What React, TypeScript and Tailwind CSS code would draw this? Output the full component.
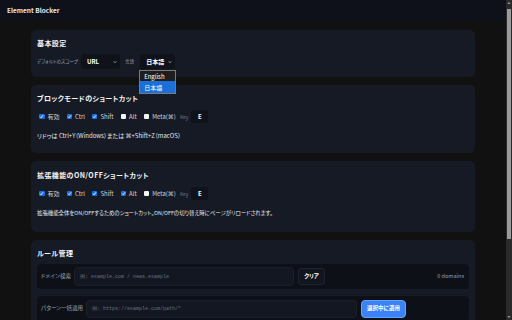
import React from 'react';

function Chevron() {
  return (
    <svg viewBox="0 0 10 10" className="w-[4px] h-[4px]" fill="none" stroke="#d1d5db" strokeWidth="2">
      <path d="M2 3.5l3 3 3-3" />
    </svg>
  );
}

function Select({ value, w }: { value: string; w: string }) {
  return (
    <div className={`${w} h-[15px] flex items-center justify-between rounded-[3px] bg-[#0f1219] pl-[6px] pr-[3px] text-[6px] font-bold text-white`}>
      <span>{value}</span>
      <Chevron />
    </div>
  );
}

function Check({ on }: { on: boolean }) {
  if (!on) return <span className="w-[5.5px] h-[5.5px] rounded-[1px] bg-[#f5f5f5] shrink-0" />;
  return (
    <span className="w-[5.5px] h-[5.5px] rounded-[1px] bg-[#1a6fe0] flex items-center justify-center shrink-0">
      <svg viewBox="0 0 10 10" className="w-[5px] h-[5px]" fill="none" stroke="white" strokeWidth="1.8">
        <path d="M2.2 5.4l2 2 3.8-4.8" />
      </svg>
    </span>
  );
}

const Cmd = () => <span className="font-['DejaVu_Sans',sans-serif]">⌘</span>;

function ShortcutRow({ alt }: { alt: boolean }) {
  const items: [React.ReactNode, boolean][] = [
    ['有効', true],
    ['Ctrl', true],
    ['Shift', true],
    ['Alt', alt],
    [<>Meta(<Cmd />)</>, false],
  ];
  return (
    <div className="flex items-center h-[13px] pl-[2px]">
      {items.map(([label, on], i) => (
        <label key={i} className={`flex items-center gap-[3px] ${i ? 'ml-[7px]' : ''}`}>
          <Check on={on} />
          <span className="text-[6px] text-[#d1d5db]">{label}</span>
        </label>
      ))}
      <span className="ml-[4px] text-[5px] text-[#6b7280]">Key</span>
      <span className="ml-[3px] w-[17px] h-[13px] rounded-[3px] bg-[#0f1219] flex items-center justify-center text-[6px] font-bold text-white">E</span>
    </div>
  );
}

function Card({ title, children, className = '' }: { title: string; children: React.ReactNode; className?: string }) {
  return (
    <section className={`rounded-[5px] bg-[#161a25] px-[6px] pt-[8px] ${className}`}>
      <h2 className="text-[7px] leading-[10px] font-bold tracking-[0.4px] text-[#f3f4f6]">{title}</h2>
      {children}
    </section>
  );
}

export default function App() {
  return (
    <div className="flex h-[320px] w-[512px] overflow-hidden bg-[#111111] font-['Noto_Sans_CJK_JP',sans-serif] [font-feature-settings:'palt']">
      <div className="w-[506px] shrink-0">
        <header className="h-[21px] bg-[#0e1119] flex items-center px-[7px] text-[6.5px] font-bold text-[#e5e7eb]">
          Element Blocker
        </header>

        <main className="px-[31px] pt-[9px] flex flex-col gap-[8px]">
          <Card title="基本設定" className="pb-[8px]">
            <div className="mt-[6px] flex items-center h-[15px]">
              <span className="text-[4.6px] text-[#9ca3af]">デフォルトのスコープ</span>
              <div className="ml-[3px]">
                <Select value="URL" w="w-[39px]" />
              </div>
              <span className="ml-[5px] text-[4.6px] text-[#9ca3af]">言語</span>
              <div className="relative ml-[6px]">
                <Select value="日本語" w="w-[35px]" />
                <div className="absolute top-[16px] left-[-1px] w-[37px] border border-[#7a7a7a] bg-[#1e1e1e] text-[6px] text-white z-10">
                  <div className="h-[10px] flex items-center pl-[4px]">English</div>
                  <div className="h-[12px] flex items-center pl-[4px] bg-[#1a6fd8]">日本語</div>
                </div>
              </div>
            </div>
          </Card>

          <Card title="ブロックモードのショートカット" className="pb-[12px]">
            <div className="mt-[7px]">
              <ShortcutRow alt={false} />
            </div>
            <p className="mt-[8px] text-[6px] leading-[10px] text-[#e5e7eb]">
              リドゥは Ctrl+Y（Windows）または <Cmd />+Shift+Z（macOS）
            </p>
          </Card>

          <Card title="拡張機能のON/OFFショートカット" className="pb-[14px] pt-[9px]">
            <div className="mt-[7px]">
              <ShortcutRow alt={true} />
            </div>
            <p className="mt-[8px] text-[5.4px] leading-[10px] text-[#e5e7eb]">
              拡張機能全体をON/OFFするためのショートカット。ON/OFFの切り替え時にページがリロードされます。
            </p>
          </Card>

          <Card title="ルール管理" className="pb-[12px] pt-[7px]">
            <div className="mt-[6px] flex items-center h-[25px] rounded-[4px] bg-[#0d1017] pl-[4px] pr-[5px]">
              <span className="text-[5.5px] text-[#9ca3af] w-[32px]">ドメイン検索</span>
              <input
                readOnly
                placeholder="例: example.com / news.example"
                className="ml-[1px] w-[220px] h-[19px] rounded-[4px] bg-[#131722] border border-[#1a1f2a] px-[5px] font-['Liberation_Mono',monospace] text-[5px] text-white placeholder:text-[#6b7280] outline-none"
              />
              <button className="ml-[4px] w-[27px] h-[17px] rounded-[3px] bg-[#111520] border border-[#1e2330] text-[5.5px] font-bold text-white">
                クリア
              </button>
              <span className="ml-auto text-[5.5px] text-[#9ca3af]">0 domains</span>
            </div>

            <div className="mt-[7px] flex items-center h-[25px] rounded-[4px] bg-[#0d1017] pl-[4px] pr-[5px]">
              <span className="text-[5.5px] text-[#9ca3af] w-[45px]">パターン一括適用</span>
              <input
                readOnly
                placeholder="例: https://example.com/path/*"
                className="w-[271px] h-[18px] rounded-[4px] bg-[#131722] border border-[#1a1f2a] px-[5px] font-['Liberation_Mono',monospace] text-[5px] text-white placeholder:text-[#6b7280] outline-none"
              />
              <button className="ml-[4px] w-[45px] h-[18px] rounded-[4px] bg-[#3b82f6] border border-[#60a5fa] text-[5.5px] font-bold text-white">
                選択中に適用
              </button>
            </div>

            <div className="mt-[7px] h-[60px] rounded-[4px] bg-[#0d1017]" />
          </Card>
        </main>
      </div>

      <div className="w-[6px] h-[320px] bg-[#2a2a2a] flex flex-col items-center">
        <svg viewBox="0 0 6 6" className="w-[6px] h-[6px] shrink-0">
          <path d="M1.5 4L3 2l1.5 2z" fill="#a3a3a3" />
        </svg>
        <div className="mt-[3px] w-[4px] h-[230px] bg-[#9b9b9b]" />
        <div className="flex-1" />
        <svg viewBox="0 0 6 6" className="w-[6px] h-[6px] shrink-0">
          <path d="M1.5 2L3 4l1.5-2z" fill="#a3a3a3" />
        </svg>
      </div>
    </div>
  );
}
